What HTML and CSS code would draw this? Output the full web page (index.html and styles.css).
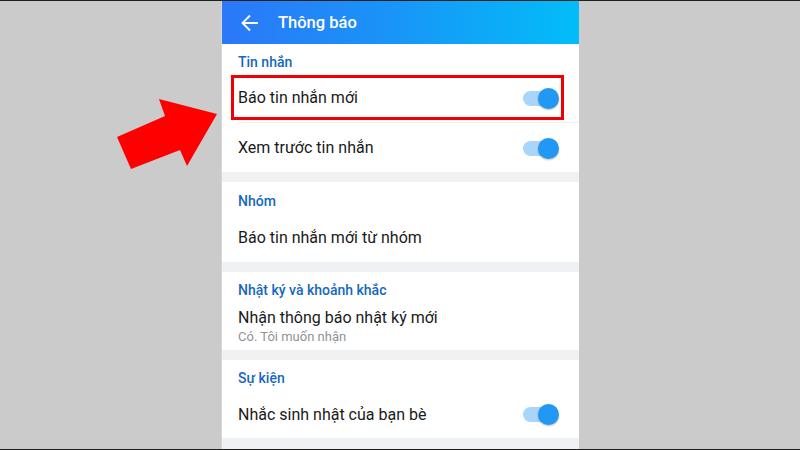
FILE: index.html
```html
<!DOCTYPE html>
<html lang="vi">
<head>
<meta charset="utf-8">
<title>Thông báo</title>
<link rel="stylesheet" href="styles.css">
</head>
<body>
<div class="stage">
  <svg class="pointer" width="110" height="80" viewBox="110 92 110 80" aria-hidden="true">
    <polygon points="117,137 131,169 180,150 187,166 217,114 159,99 165,116" fill="#ff0000"/>
  </svg>
  <div class="phone">
    <header class="appbar">
      <svg class="back" width="20" height="20" viewBox="0 0 20 20" aria-hidden="true">
        <path d="M18 10H3M10 2.5L2.5 10L10 17.5" fill="none" stroke="#fff" stroke-width="1.8"/>
      </svg>
      <h1 class="title">Thông báo</h1>
    </header>

    <section class="group">
      <div class="label">Tin nhắn</div>
      <div class="row row-first highlighted">
        <span class="text">Báo tin nhắn mới</span>
        <span class="toggle"><span class="knob"></span></span>
      </div>
      <div class="row row-second">
        <span class="text">Xem trước tin nhắn</span>
        <span class="toggle"><span class="knob"></span></span>
      </div>
    </section>

    <section class="group">
      <div class="label label-tall">Nhóm</div>
      <div class="row row-single">
        <span class="text">Báo tin nhắn mới từ nhóm</span>
      </div>
    </section>

    <section class="group">
      <div class="label">Nhật ký và khoảnh khắc</div>
      <div class="row row-double">
        <div class="stack">
          <span class="text">Nhận thông báo nhật ký mới</span>
          <span class="sub">Có. Tôi muốn nhận</span>
        </div>
      </div>
    </section>

    <section class="group group-last">
      <div class="label">Sự kiện</div>
      <div class="row row-event">
        <span class="text">Nhắc sinh nhật của bạn bè</span>
        <span class="toggle"><span class="knob"></span></span>
      </div>
    </section>
  </div>
</div>
</body>
</html>
```

FILE: styles.css
```css
* { box-sizing: border-box; }

html, body {
  margin: 0;
  padding: 0;
}

body {
  width: 800px;
  height: 450px;
  overflow: hidden;
  background: #cbcbcb;
  font-family: Roboto, "Noto Sans", "Liberation Sans", sans-serif;
  border-top: 1px solid #1e1e1e;
  border-bottom: 1px solid #1e1e1e;
}

.stage {
  position: relative;
  height: 448px;
  display: flex;
}

.pointer {
  position: absolute;
  left: 110px;
  top: 91px;
}

.phone {
  margin-left: 222px;
  width: 357px;
  height: 448px;
  background: #f0f1f3;
  display: flex;
  flex-direction: column;
  box-shadow: -1px 0 0 #d6d6d6;
}

.appbar {
  height: 43px;
  flex: none;
  display: flex;
  align-items: center;
  padding-left: 18px;
  background: linear-gradient(90deg, #2b78f8 0%, #1a93f8 45%, #02bdf8 100%);
}

.back { flex: none; }

.title {
  margin: 0 0 0 18px;
  font-size: 16.5px;
  font-weight: 500;
  color: #ffffff;
  line-height: 24px;
}

.group {
  background: #ffffff;
  margin-bottom: 10px;
  flex: none;
}

.group-last { margin-bottom: 0; }

.label {
  padding: 8px 16px 0;
  line-height: 20px;
  font-size: 14px;
  color: #1569bd;
  font-weight: 500;
}

.label-tall { padding-top: 9px; }

.row {
  position: relative;
  display: flex;
  align-items: center;
  justify-content: space-between;
  padding: 2px 22px 0 16px;
  height: 50px;
}

.row-second::before {
  content: "";
  position: absolute;
  left: 16px;
  right: 0;
  top: 0;
  border-top: 1px solid #f1f1f1;
}

.row-single { height: 51px; padding-top: 3px; }

.row-double {
  height: 50px;
  align-items: flex-start;
  padding-top: 8px;
}

.row-event { padding-top: 3px; }

.highlighted::after {
  content: "";
  position: absolute;
  left: 9px;
  right: 15px;
  top: 3px;
  bottom: 2px;
  border: 3px solid #f00000;
  pointer-events: none;
}

.text {
  font-size: 16px;
  color: #1a1a1a;
  line-height: 20px;
}

.stack {
  display: flex;
  flex-direction: column;
}

.sub {
  font-size: 13px;
  color: #8e9296;
  line-height: 16px;
  margin-top: 1px;
}

.toggle {
  position: relative;
  width: 34px;
  height: 15px;
  border-radius: 8px;
  background: #a9d5fb;
  flex: none;
}

.knob {
  position: absolute;
  right: -2px;
  top: -3px;
  width: 21px;
  height: 21px;
  border-radius: 50%;
  background: #2199f4;
  box-shadow: 0 1px 2px rgba(0, 0, 0, 0.28);
}
```
